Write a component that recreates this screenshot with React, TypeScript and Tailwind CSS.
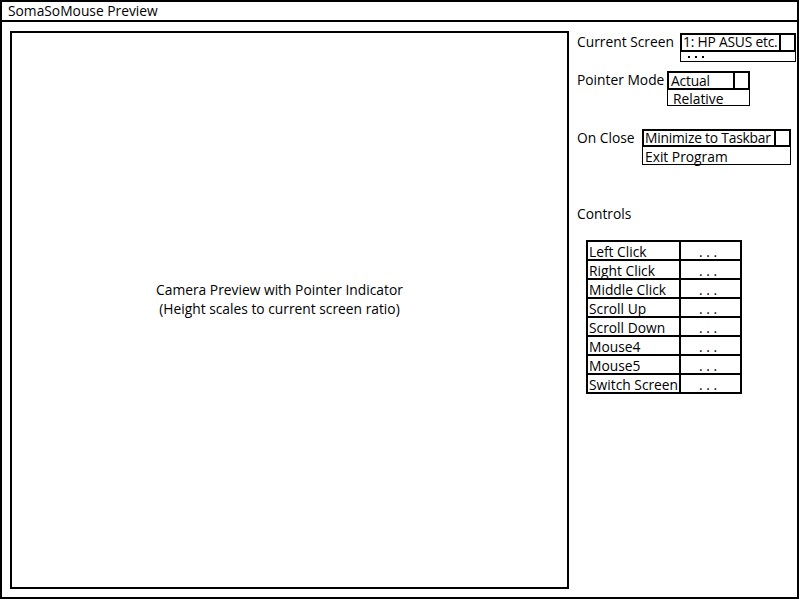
import React from "react";

const font = { fontFamily: '"Open Sans", "Noto Sans", sans-serif' };

function Drop({
  label,
  labelW,
  boxW,
  value,
  valuePad,
  item,
  itemCls,
  itemPad,
  btnW,
  topH,
  mt,
}: {
  label: string;
  labelW: string;
  boxW: string;
  value: string;
  valuePad: string;
  item: React.ReactNode;
  itemCls: string;
  itemPad: string;
  btnW: string;
  topH: string;
  mt: string;
}) {
  return (
    <div className={`flex items-start ${mt}`}>
      <div className={`${labelW} ${topH} flex items-center shrink-0 whitespace-nowrap`}>{label}</div>
      <div className={`${boxW} flex flex-col`}>
        <div className={`${topH} border-2 border-black flex`}>
          <div className={`flex-1 ${valuePad} flex items-center whitespace-nowrap min-w-0 tracking-[-0.2px]`}>{value}</div>
          <div className={`${btnW} shrink-0 border-l-2 border-black bg-white`} />
        </div>
        <div className={`border border-t-0 border-black ${itemCls} ${itemPad} whitespace-nowrap flex items-center`}>
          {item}
        </div>
      </div>
    </div>
  );
}

const controls = [
  "Left Click",
  "Right Click",
  "Middle Click",
  "Scroll Up",
  "Scroll Down",
  "Mouse4",
  "Mouse5",
  "Switch Screen",
];

export default function App() {
  return (
    <div className="w-[800px] h-[600px] bg-white text-black text-[13.8px]" style={font}>
      <div className="w-[799px] h-[599px] border-2 border-black flex flex-col">
        <div className="h-[20px] border-b-2 border-black pl-[6px] leading-[18px]">SomaSoMouse Preview</div>
        <div className="flex flex-1">
          <div className="ml-[8px] mt-[9px] w-[559px] h-[558px] border-2 border-black flex items-center justify-center">
            <div className="text-center leading-[19px] mb-[22px] mr-[20px]">
              Camera Preview with Pointer Indicator
              <br />
              (Height scales to current screen ratio)
            </div>
          </div>
          <div className="ml-[8px] flex flex-col">
            <Drop
              label="Current Screen"
              labelW="w-[103px]"
              boxW="w-[116px]"
              value="1: HP ASUS etc."
              valuePad="pl-px"
              item={
                <div className="flex gap-[5px]">
                  <span className="w-[2px] h-[2px] bg-black" />
                  <span className="w-[2px] h-[2px] bg-black" />
                  <span className="w-[2px] h-[2px] bg-black" />
                </div>
              }
              itemCls="h-[10px]"
              itemPad="pl-[7px]"
              btnW="w-[15px]"
              topH="h-[19px]"
              mt="mt-[11px]"
            />
            <Drop
              label="Pointer Mode"
              labelW="w-[90px]"
              boxW="w-[83px]"
              value="Actual"
              valuePad="pl-[2px] pt-[2px]"
              item="Relative"
              itemCls="h-[16px] pt-[3px]"
              itemPad="pl-[5px]"
              btnW="w-[15px]"
              topH="h-[19px]"
              mt="mt-[9px]"
            />
            <Drop
              label="On Close"
              labelW="w-[65px]"
              boxW="w-[149px]"
              value="Minimize to Taskbar"
              valuePad="pl-px"
              item="Exit Program"
              itemCls="h-[18px] pt-[3px]"
              itemPad="pl-[2px]"
              btnW="w-[15px]"
              topH="h-[18px]"
              mt="mt-[23px]"
            />
            <div className="mt-[39px] leading-[19px]">Controls</div>
            <div className="ml-[9px] mt-[17px] w-[156px] border-x-2 border-t-2 border-black">
              {controls.map((c) => (
                <div key={c} className="h-[19px] border-b-2 border-black flex">
                  <div className="w-[93px] border-r-2 border-black pl-px pt-px leading-[17px] whitespace-nowrap">{c}</div>
                  <div className="flex-1 text-center pt-px pr-[5px] leading-[17px]">. . .</div>
                </div>
              ))}
            </div>
          </div>
        </div>
      </div>
    </div>
  );
}
